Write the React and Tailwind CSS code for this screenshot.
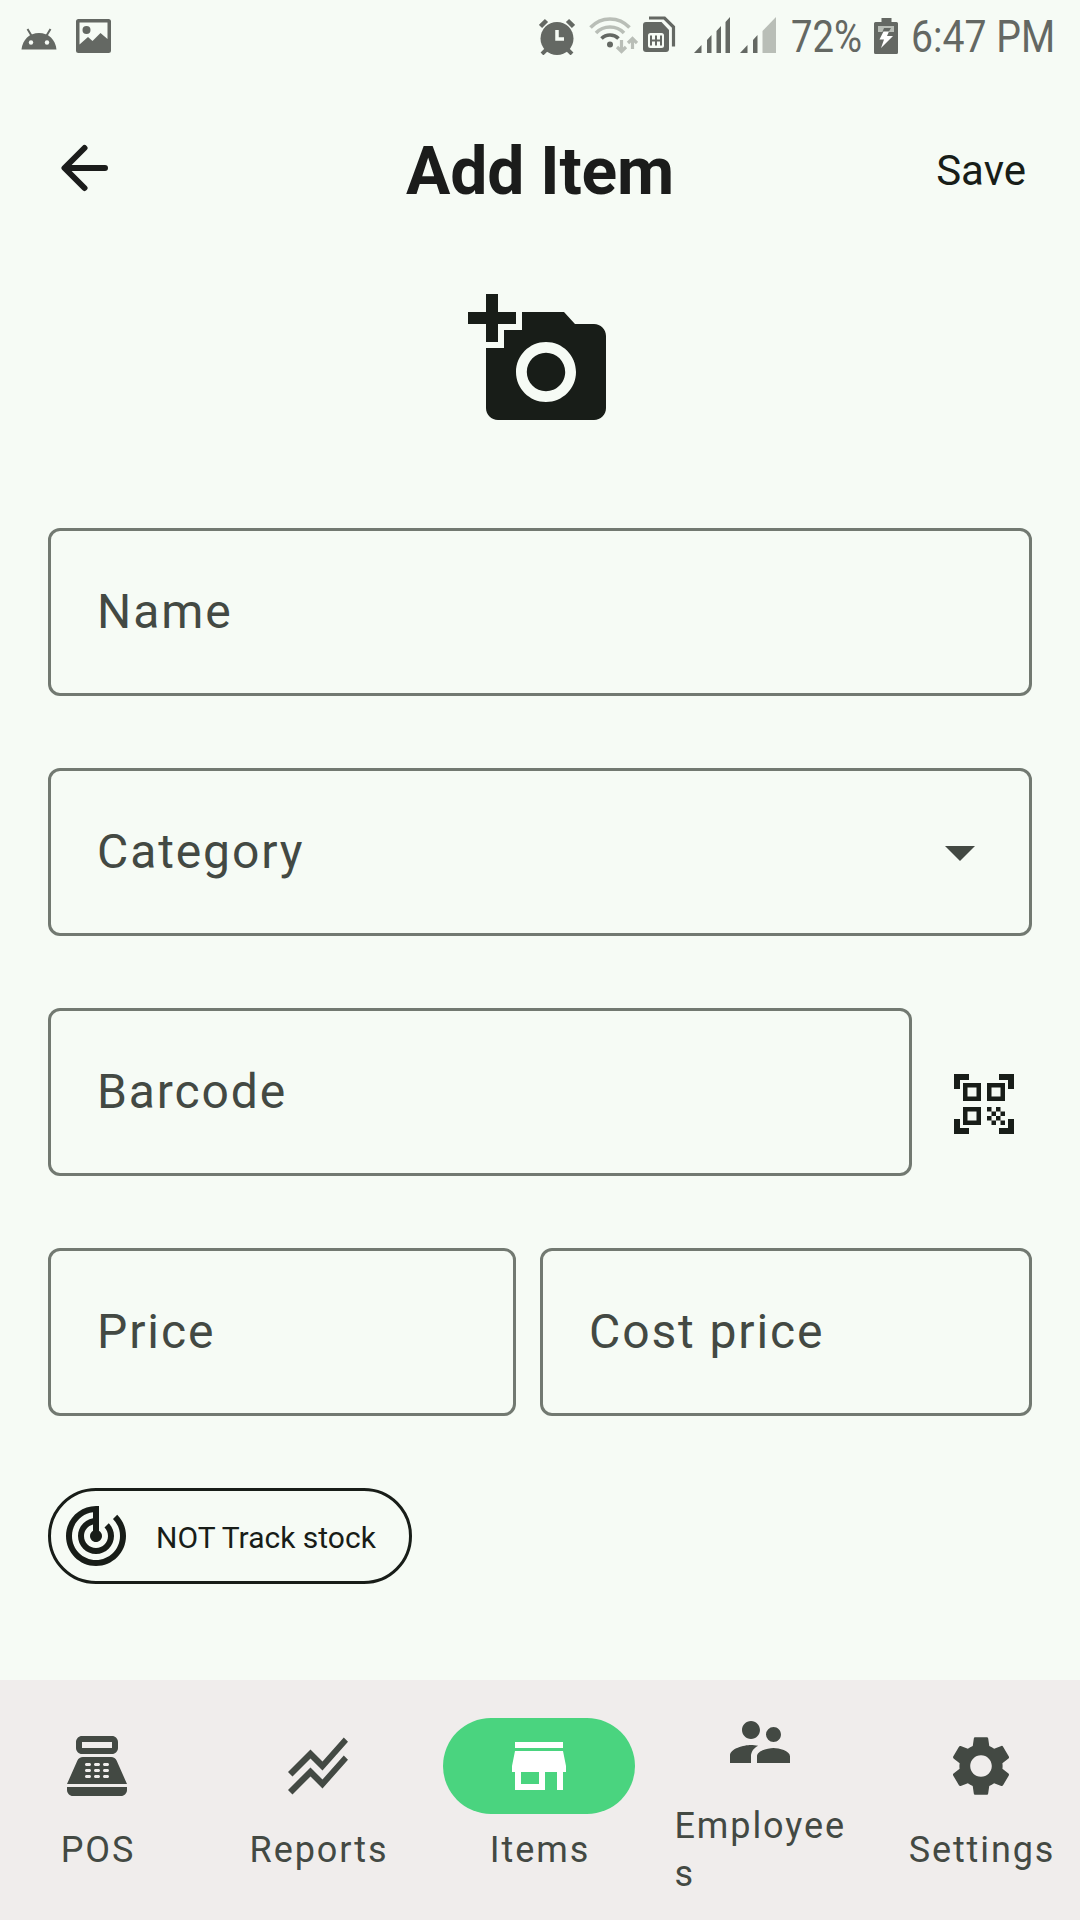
import {
  MdAddAPhoto, MdArrowDropDown, MdQrCodeScanner, MdTrackChanges,
  MdPointOfSale, MdStackedLineChart, MdStore, MdSupervisorAccount, MdSettings,
} from "react-icons/md";

function AndroidIcon() {
  return (
    <svg className="h-[22px] w-[36px]" viewBox="0 0 36 22" fill="none">
      <path d="M0.500 21.500C1.500 11.500 8.500 5 18 5s16.500 6.500 17.500 16.500z" fill="#646863" />
      <path d="M6.500 1l4.500 7.500M29.500 1L25 8.500" stroke="#646863" strokeWidth="2" />
      <circle cx="10" cy="14.500" r="2.200" fill="#f6fbf5" />
      <circle cx="26" cy="14.500" r="2.200" fill="#f6fbf5" />
    </svg>
  );
}

function PictureIcon() {
  return (
    <svg className="h-[34px] w-[35px]" viewBox="0 0 35 34" fill="#646863">
      <path fillRule="evenodd" d="M2.500 0h30a2.500 2.500 0 0 1 2.500 2.500v29a2.500 2.500 0 0 1-2.500 2.500h-30A2.500 2.500 0 0 1 0 31.500v-29A2.500 2.500 0 0 1 2.500 0zM3.500 3.500v22L12 18l4.500 4 8-8L31.500 20v-16.500z" />
      <circle cx="10.500" cy="11" r="4" />
    </svg>
  );
}

function AlarmIcon() {
  return (
    <svg className="h-[37px] w-[36px]" viewBox="0 0 36 37" fill="none" stroke="#646863">
      <circle cx="18" cy="20.500" r="16.500" fill="#646863" stroke="none" />
      <path d="M1.500 8.500L7.500 2.500M28.500 2.500l6 6" strokeWidth="4.500" />
      <path d="M8 31l-5 5M28 31l5 5" strokeWidth="4" />
      <path d="M18 12v9h7" stroke="#f6fbf5" strokeWidth="3.500" />
    </svg>
  );
}

function WifiIcon() {
  return (
    <svg className="h-[37px] w-[49px]" viewBox="0 0 49 37" fill="none">
      <path d="M1.500 10.500C12-1 30-1 40.500 10.500M7 16C14.500 8 27.500 8 35 16" stroke="#b9beb7" strokeWidth="3.500" />
      <path d="M12.500 21.500c4.500-4.700 12.500-4.700 17 0" stroke="#646863" strokeWidth="3.500" />
      <circle cx="21" cy="27.500" r="3" fill="#646863" />
      <path d="M32.500 23v11M28 30l4.500 4.500L37 30M43.500 32V22M39 26l4.500-4.500L48 26" stroke="#b9beb7" strokeWidth="3.200" />
    </svg>
  );
}

function SimIcon() {
  return (
    <svg className="h-[37px] w-[33px]" viewBox="0 0 33 37" fill="none">
      <path d="M6 2h15.500L30.500 11v19.500" stroke="#646863" strokeWidth="3.200" />
      <path d="M3 6h15.500L26 14v19a3 3 0 0 1-3 3H3a3 3 0 0 1-3-3V9a3 3 0 0 1 3-3z" fill="#646863" />
      <rect x="5" y="17" width="16" height="15" rx="2.500" fill="#f6fbf5" />
      <path d="M8 19.500v10M13 19.500v10M18 19.500v10M8 24.500h10" stroke="#646863" strokeWidth="2" />
    </svg>
  );
}

function SignalFull() {
  return (
    <svg className="h-[36px] w-[36px]" viewBox="0 0 36 36" fill="#646863">
      <path d="M0 36L7.500 28v8zM13 23l4.500-5v18H13zM22.500 14L27 9v27h-4.500zM31.500 5L36 0v36h-4.500z" />
    </svg>
  );
}

function SignalHalf() {
  return (
    <svg className="h-[36px] w-[36px]" viewBox="0 0 36 36" fill="#646863">
      <path d="M0 36L7.500 28v8zM13 23l4.500-5v18H13z" />
      <path d="M22.500 14L36 0v36H22.500z" fill="#b9beb7" />
    </svg>
  );
}

function BatteryIcon() {
  return (
    <svg className="h-[36px] w-[24px]" viewBox="0 0 24 36">
      <path d="M7.500 0h10v4H22.500A1.500 1.500 0 0 1 24 5.500v29a1.500 1.500 0 0 1-1.500 1.500h-21A1.500 1.500 0 0 1 0 34.500v-29A1.500 1.500 0 0 1 1.500 4h6z" fill="#646863" />
      <path d="M4 8h16v6H4z" fill="#b9beb7" />
      <path d="M10 10h7l-3 5h-6z" fill="#646863" />
      <path d="M9.500 13.500h5.500l-2 4.500h6L7 30l3-8.500H5.500z" fill="#fff" />
    </svg>
  );
}

function BackArrow() {
  return (
    <svg className="h-[48px] w-[48px]" viewBox="0 0 48 48" fill="none" stroke="#1b1c1b" strokeWidth="6" strokeLinecap="round" strokeLinejoin="round">
      <path d="M45 24H5M24.500 4L4.500 24 24.500 44" />
    </svg>
  );
}

function Field({ label, className, children }) {
  return (
    <div className={`flex h-[168px] items-center justify-between rounded-[12px] border-[3px] border-[#727971] pr-[33px] pl-[46px] ${className}`}>
      <span className="text-[48px] leading-[72px] tracking-[1.9px] text-[#434943]">{label}</span>
      {children}
    </div>
  );
}

function NavItem({ icon: Icon, label, active }) {
  return (
    <button className="flex h-full w-[197px] flex-col items-center justify-center text-[#434943]">
      <span className={active ? "flex h-[96px] w-[192px] items-center justify-center rounded-full bg-[#4ad47f] text-white" : "flex h-[96px] w-[192px] items-center justify-center"}>
        <Icon className="size-[72px]" />
      </span>
      <span className="mt-[12px] ml-[3px] max-w-[173px] text-left text-[36px] leading-[48px] tracking-[1.9px] break-all">{label}</span>
    </button>
  );
}

export default function App() {
  return (
    <div className="flex h-[1920px] w-[1080px] flex-col overflow-hidden bg-[#f6fbf5] font-['Roboto',sans-serif] text-[#181d18]">
      <header className="flex h-[72px] shrink-0 items-center text-[#646863]">
        <div className="ml-[21px] flex items-center gap-[19px]">
          <div className="mt-[5px]"><AndroidIcon /></div>
          <PictureIcon />
        </div>
        <div className="mr-[24px] ml-auto flex items-center">
          <AlarmIcon />
          <div className="mb-[2px] ml-[14px]"><WifiIcon /></div>
          <div className="mb-[3px] ml-[5px]"><SimIcon /></div>
          <div className="mb-[2px] ml-[18px]"><SignalFull /></div>
          <div className="mb-[2px] ml-[10px]"><SignalHalf /></div>
          <span className="mt-[2px] ml-[15px] w-[72px] origin-left scale-x-[.87] text-[44px] leading-[52px] whitespace-nowrap">72%</span>
          <div className="ml-[11px]"><BatteryIcon /></div>
          <span className="mt-[2px] ml-[13px] w-[145px] origin-left scale-x-[.89] text-[44px] leading-[52px] whitespace-nowrap">6:47 PM</span>
        </div>
      </header>

      <div className="grid h-[192px] shrink-0 grid-cols-[1fr_auto_1fr] items-center pr-[54px] pl-[60px]">
        <button aria-label="Back"><BackArrow /></button>
        <h1 className="mt-[8px] mr-[6px] text-[66px] leading-[84px] font-bold tracking-[-0.2px] text-[#1b1c1b]">Add Item</h1>
        <button className="mt-[6px] justify-self-end text-[42px] leading-[60px]">Save</button>
      </div>

      <main className="flex grow flex-col px-[48px]">
        <button aria-label="Add photo" className="mt-[24px] self-center"><MdAddAPhoto className="size-[144px]" /></button>
        <div className="mt-[96px] flex flex-col gap-[72px]">
          <Field label="Name" className="w-full" />
          <Field label="Category" className="w-full">
            <MdArrowDropDown className="size-[72px] text-[#434943]" />
          </Field>
          <div className="flex items-center">
            <Field label="Barcode" className="w-[864px]" />
            <MdQrCodeScanner className="mt-[24px] ml-[36px] size-[72px]" />
          </div>
          <div className="flex gap-[24px]">
            <Field label="Price" className="w-[468px]" />
            <Field label="Cost price" className="w-[492px]" />
          </div>
          <button className="flex h-[96px] w-[364px] items-center rounded-full border-[3px] border-[#181d18] pl-[9px]">
            <MdTrackChanges className="size-[72px]" />
            <span className="ml-[24px] pt-[3px] text-[30px] leading-[40px] whitespace-nowrap">NOT Track stock</span>
          </button>
        </div>
      </main>

      <nav className="flex h-[240px] shrink-0 bg-[#f0edec] pb-[8px]">
        <div className="-ml-[2px] flex shrink-0 gap-[24px]">
          <NavItem icon={MdPointOfSale} label="POS" />
          <NavItem icon={MdStackedLineChart} label="Reports" />
          <NavItem icon={MdStore} label="Items" active />
          <NavItem icon={MdSupervisorAccount} label="Employees" />
          <NavItem icon={MdSettings} label="Settings" />
        </div>
      </nav>
    </div>
  );
}
